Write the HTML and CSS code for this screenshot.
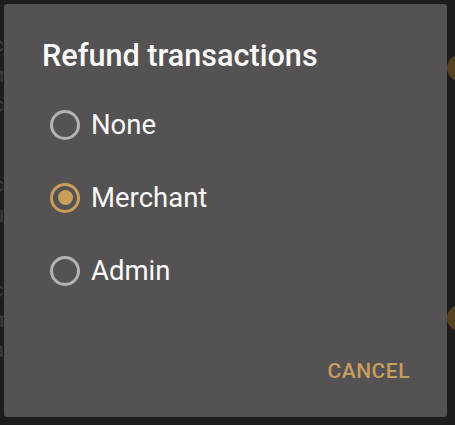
FILE: index.html
```html
<!DOCTYPE html>
<html>
<head>
<meta charset="utf-8">
<link rel="stylesheet" href="styles.css">
</head>
<body>
<div class="backdrop">
  <div class="bg-row r1"><div class="bg-text"><span>cc</span><span>mm</span><span>cc</span></div><div class="bg-dot"></div></div>
  <div class="bg-row r2"><div class="bg-text"><span>cc</span><span>uu</span></div></div>
  <div class="bg-row r3"><div class="bg-text"><span>cc</span><span>mm</span><span>aa</span></div><div class="bg-dot"></div></div>
</div>
<div class="dialog">
  <h1 class="title">Refund transactions</h1>
  <ul class="options">
    <li class="option"><span class="radio"></span><span class="label">None</span></li>
    <li class="option"><span class="radio checked"></span><span class="label">Merchant</span></li>
    <li class="option"><span class="radio"></span><span class="label">Admin</span></li>
  </ul>
  <div class="actions"><button class="btn">CANCEL</button></div>
</div>
</body>
</html>
```

FILE: styles.css
```css
html, body {
  margin: 0;
  padding: 0;
  width: 455px;
  height: 425px;
  overflow: hidden;
  background: #1d1d1d;
  font-family: Roboto, "Noto Sans", sans-serif;
}
.backdrop {
  padding-top: 30px;
  display: flex;
  flex-direction: column;
}
.bg-row {
  display: flex;
  justify-content: space-between;
  align-items: flex-start;
}
.r2 { margin-top: 50px; }
.r3 { margin-top: 45px; }
.bg-text {
  display: flex;
  flex-direction: column;
  color: #3c3c3c;
  font-size: 22px;
  line-height: 30px;
  margin-left: -8px;
}
.bg-dot {
  width: 26px;
  height: 26px;
  border-radius: 50%;
  background: #56421f;
  margin-right: -18px;
}
.r1 .bg-dot { margin-top: 25px; }
.r3 .bg-dot { margin-top: 30px; }
.dialog {
  position: absolute;
  left: 4px;
  top: 4px;
  width: 443px;
  height: 413px;
  background: #545253;
  border-radius: 3px;
  box-sizing: border-box;
  padding: 34px 0 0 0;
  display: flex;
  flex-direction: column;
}
.title {
  margin: 0 0 0 38px;
  font-size: 30.6px;
  font-weight: 500;
  color: #fafafa;
  line-height: 36px;
}
.options {
  list-style: none;
  margin: 14px 0 0 0;
  padding: 0;
}
.option {
  height: 73px;
  display: flex;
  align-items: center;
  padding-left: 46px;
}
.radio {
  width: 30px;
  height: 30px;
  box-sizing: border-box;
  border: 3px solid #b3b3b3;
  border-radius: 50%;
  display: flex;
  align-items: center;
  justify-content: center;
  margin-right: 11px;
}
.radio.checked {
  border-color: #c99e5d;
}
.radio.checked::after {
  content: "";
  width: 15px;
  height: 15px;
  border-radius: 50%;
  background: #c99e5d;
}
.label {
  font-size: 27.5px;
  color: #fafafa;
}
.actions {
  margin-top: auto;
  display: flex;
  justify-content: flex-end;
  padding: 0 37px 34px 0;
}
.btn {
  background: none;
  border: 0;
  padding: 0;
  font-family: Roboto, sans-serif;
  font-weight: 500;
  font-size: 21px;
  letter-spacing: 0.5px;
  color: #c99e5d;
}
```
